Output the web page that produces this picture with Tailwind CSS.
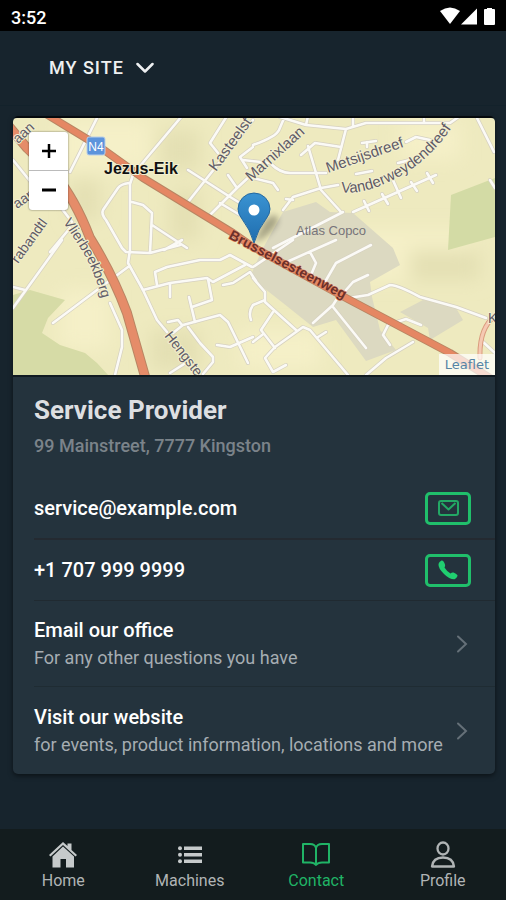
<!DOCTYPE html>
<html lang="en">
<head>
  <meta charset="UTF-8" />
  <meta name="viewport" content="width=device-width, initial-scale=1.0"/>
  <title>Contact</title>
  <script src="https://cdn.jsdelivr.net/npm/@tailwindcss/browser@4"></script>
</head>
<body class="bg-[#17242d] min-h-screen flex flex-col font-['Roboto',sans-serif] text-white">

  <!-- Status bar -->
  <div class="bg-black h-[31px] flex items-center justify-between pl-[11px] pr-2">
    <span class="text-[18px] leading-6 font-medium pt-1">3:52</span>
    <svg class="w-[59px] h-[18px]" viewBox="0 0 59 18" fill="#fff" aria-hidden="true">
      <path d="M1 4Q11-3 21 4L11 17Z"/>
      <path d="M22 17.500 38 1.500V17.500Z"/>
      <path d="M48 2V1h5v1h2q1 0 1 1v14q0 1-1 1h-9q-1 0-1-1V3q0-1 1-1Z"/>
    </svg>
  </div>

  <header class="h-[75px] flex items-center pl-[49px] border-b border-[#13222b]">
    <button type="button" class="flex items-center gap-3 text-[18px] leading-6 font-medium tracking-[1px] text-[#eef0f1]">
      MY SITE
      <svg class="w-[18px] h-3" viewBox="0 0 18 12" fill="none" stroke="currentColor" stroke-width="2.500" stroke-linecap="round" stroke-linejoin="round" aria-hidden="true"><path d="M1.500 2 9 9.500 16.500 2"/></svg>
    </button>
  </header>

  <main class="flex-1 pl-[13px] pr-[11px] pt-[10px] pb-10">
    <section class="bg-[#24333d] rounded-[5px] overflow-hidden shadow-[0_2px_5px_rgba(0,0,0,0.5)]">

      <!-- Map -->
      <div class="relative border-y-2 border-t-[#05090c] border-b-[#101a21]">
        <svg class="block w-full h-[257px] rounded-t-[4px]" viewBox="13 118 482 257" preserveAspectRatio="xMidYMid slice" font-family="Liberation Sans, Arial, sans-serif" role="img" aria-label="Map of Jezus-Eik">
          <defs>
            <filter id="soft" x="-30%" y="-30%" width="160%" height="160%"><feGaussianBlur stdDeviation="9"/></filter>
            <filter id="shade" x="-50%" y="-50%" width="200%" height="200%"><feGaussianBlur stdDeviation="3"/></filter>
            <linearGradient id="pin" x1="0" y1="0" x2="0" y2="1"><stop offset="0" stop-color="#3a93d2"/><stop offset="1" stop-color="#1f6dae"/></linearGradient>
            <g id="streets">
              <path d="M98 116 70 172M62 240 13 308M13 287 25 290M13 160 30 181M53 197 72 222M70 228 50 252"/>
              <path d="M182 116 145 160 133 175 130 184V250L128 263 143 290 157 320 167 332"/>
              <path d="M129 183Q121 184 118 188L103 210Q101 214 106 220L122 248 126 252 150 253 180 245M132 202 143 205 152 213 150 253M152 225 187 248M164 250 182 240"/>
              <path d="M227 116 210 143 218 153M253 120 188 202M188 170 227 195 240 203M228 175 237 188 208 217M220 203 240 215M253 147 240 157 247 168M237 188 250 176"/>
              <path d="M253 145Q276 137 279 130L285 116M280 117 306 125 346 129 366 123 450 123 460 116M308 116 306 125M353 116V127M424 116V121M346 129 338 160"/>
              <path d="M301 155 315 143 341 147M308 146 316 173 321 190 341 212M243 160 270 163Q280 173 290 173H326M253 178 273 183 278 190M283 210 293 197 321 188 338 185M286 199 293 200M273 248 343 212M353 212 436 175"/>
              <path d="M364 201 369 211M382 194 388 204M392 178 401 198M411 182 417 191M427 173 433 183"/>
              <path d="M476 116 494 152M406 142 416 137 430 140M362 143 376 141M367 147V142M356 174 372 171M398 163 410 160M490 180 495 188"/>
              <path d="M53 323 97 290 128 267M110 303 122 330V347L115 375"/>
              <path d="M157 285 155 272 167 267 200 260 220 260 230 255 252 267M143 290 170 283 207 278 213 282 245 265M170 284V297M208 279 212 300 192 307M189 297 195 322M168 322 178 320 182 325"/>
              <path d="M173 333 183 325 220 315 228 322 248 363M188 327 200 343 213 357V362L203 374M170 373 184 364M217 345 230 347 253 337M223 285 233 283 250 272 256 281"/>
              <path d="M253 278 265 292V302L296 330M253 305 265 300M253 305Q248 312 251 320M273 312 261 330 275 348M253 342 262 335M286 365 273 372 265 358 275 347 303 327 310 330 348 375M318 337 326 332"/>
              <path d="M313 323 333 305 340 294M333 307 366 348M342 299 368 295 390 285Q398 285 420 297L456 307 486 318M346 290 353 282 368 275M325 282 336 263 371 245M253 267 293 240M280 265 336 240M310 252 316 263 311 275"/>
              <path d="M366 375 386 358 413 342M390 345 383 335 388 325 406 319 421 325M483 342 495 353"/>
            </g>
          </defs>
          <rect x="13" y="116" width="482" height="260" fill="#eeeabf"/>
          <g filter="url(#soft)">
            <path fill="#f5f0c8" d="M60 120h90v50H60ZM340 230h130v50H340ZM60 290h50v60H60ZM400 120h60v40h-60ZM240 330h80v40h-80Z"/>
            <path fill="#e4e0b4" d="M70 180h30v40H70ZM160 130h40v40h-40ZM410 250h70v30h-70ZM150 330h50v40h-50ZM170 190h30v50h-30Z"/>
          </g>
          <path fill="#d6dba6" d="M13 295 30 290 65 300 48 318 42 333 60 345 85 353 97 363 109 376H13Z"/>
          <path fill="#d3dba5" d="M451 195 495 178V237L448 250Z"/>
          <path fill="#dcd9c1" d="M283 212 316 202 330 212 353 213 393 248 400 265 370 282 372 297 380 330 396 350 366 361 336 320 313 327 283 303 250 277 262 250Z"/>
          <path fill="#dcd9c1" d="M400 312 423 300 456 308 463 320 430 340 428 328Z"/>
          <g fill="none" stroke-linecap="round" stroke-linejoin="round">
            <use href="#streets" stroke="#d6d1c0" stroke-width="4"/>
            <use href="#streets" stroke="#fbfaf6" stroke-width="2.600"/>
            <path d="M495 316Q479 328 480 358" stroke="#d99a7c" stroke-width="5"/>
            <path d="M495 316Q479 328 480 358" stroke="#f5c9b2" stroke-width="3"/>
            <path d="M7 124 27 148 55 175Q75 199 90 238 113 275 127 313L146 380" stroke="#b98563" stroke-width="10"/>
            <path d="M7 124 27 148 55 175Q75 199 90 238 113 275 127 313L146 380" stroke="#e58c69" stroke-width="8"/>
            <path d="M46 114 97 145 143 178 233 233 253 247 346 298 450 353 490 378" stroke="#b98563" stroke-width="8"/>
            <path d="M46 114 97 145 143 178 233 233 253 247 346 298 450 353 490 378" stroke="#e58763" stroke-width="6"/>
          </g>

          <!-- Street names -->
          <g font-size="15" fill="#5f5b66" stroke="#f3efd0" stroke-width="2" stroke-linejoin="round" paint-order="stroke">
            <path id="vanderweyden" d="M341 192Q362 196 397 178 434 158 458 118" fill="none" stroke="none"/>
            <path id="vlier" d="M63 222 77 243Q96 270 105 312" fill="none" stroke="none"/>
            <text font-size="14" transform="translate(18 144) rotate(-43)">aan</text>
            <text font-size="14" transform="translate(17 209) rotate(-35)">aan</text>
            <text font-size="14" transform="translate(18 264) rotate(-54)">rabandtl</text>
            <text transform="translate(216 172) rotate(-54)">Kasteelst</text>
            <text transform="translate(251 182) rotate(-42)">Marnixlaan</text>
            <text transform="translate(328 173) rotate(-19)">Metsijsdreef</text>
            <text><textPath href="#vanderweyden">Vanderweydendreef</textPath></text>
            <text font-size="14"><textPath href="#vlier">Vlierbeekberg</textPath></text>
            <text font-size="14" transform="translate(164 336) rotate(52)">Hengste</text>
            <text font-size="14" x="488" y="323">K</text>
          </g>
          <text font-size="14" fill="#6b302a" stroke="#e58763" stroke-width="1" paint-order="stroke" font-weight="bold" transform="translate(228 238) rotate(28)">Brusselsesteenweg</text>
          <text x="296" y="235" font-size="13" fill="#77747a">Atlas Copco</text>
          <text x="104" y="174" font-size="16" font-weight="bold" fill="#111" stroke="#f3efd0" stroke-width="2" paint-order="stroke">Jezus-Eik</text>
          <rect x="87" y="137" width="18" height="18" rx="2" fill="#5d94dc" stroke="#b9cfe8"/>
          <text x="96" y="151" font-size="12" fill="#fff" text-anchor="middle">N4</text>

          <!-- Marker -->
          <path d="M254 243 264 222Q278 208 278 222 272 235 254 243Z" fill="#000" opacity=".3" filter="url(#shade)"/>
          <path d="M254 243Q250 229 242 219 238 214 238 209A16 16 0 0 1 270 209Q270 214 266 219 258 229 254 243Z" fill="url(#pin)" stroke="#2468a0"/>
          <circle cx="254" cy="210" r="5.500" fill="#fff"/>
        </svg>

        <div class="absolute top-[14px] left-4 w-[39px] rounded-[3px] overflow-hidden bg-white shadow-[0_0_2px_rgba(0,0,0,0.6)]">
          <button type="button" aria-label="Zoom in" class="flex w-full h-[39px] items-center justify-center border-b border-[#bbb]">
            <svg class="w-[14px] h-[14px]" viewBox="0 0 14 14" stroke="#000" stroke-width="2.500" aria-hidden="true"><path d="M7 0v14M0 7h14"/></svg>
          </button>
          <button type="button" aria-label="Zoom out" class="flex w-full h-[39px] items-center justify-center">
            <svg class="w-[14px] h-[14px]" viewBox="0 0 14 14" stroke="#000" stroke-width="3" aria-hidden="true"><path d="M0 6h14"/></svg>
          </button>
        </div>
        <a href="#" class="absolute right-0 bottom-0 h-[21px] px-[6px] bg-white/70 font-['DejaVu_Sans',sans-serif] text-[13px] leading-[21px] text-[#5584a5]">Leaflet</a>
      </div>

      <div class="pl-[21px] pr-6 pt-[17px] pb-5">
        <h1 class="text-[26px] leading-8 font-bold text-[#dddfe1]">Service Provider</h1>
        <p class="text-[18px] leading-6 pt-2 font-medium text-[#7b838a]">99 Mainstreet, 7777 Kingston</p>
      </div>

      <ul class="pl-[21px]">
        <li class="h-[62px] pr-6 flex items-center justify-between border-b-2 border-[#242a31]">
          <span class="text-[20px] leading-6 font-medium">service@example.com</span>
          <button type="button" aria-label="Send email" class="w-[46px] h-[33px] rounded-[5px] border-[3px] border-[#20bf6b] flex items-center justify-center text-[#23a865]">
            <svg class="w-[21px] h-4" viewBox="0 0 21 16" fill="none" stroke="currentColor" stroke-width="2" stroke-linejoin="round" aria-hidden="true"><rect x="1" y="1" width="19" height="14" rx="2"/><path d="M3.500 3 10.500 9.500 17.500 3"/></svg>
          </button>
        </li>
        <li class="h-[61px] pr-6 flex items-center justify-between border-b border-[#202a31]">
          <span class="text-[20px] leading-6 font-medium">+1 707 999 9999</span>
          <button type="button" aria-label="Call" class="w-[46px] h-[33px] rounded-[5px] border-[3px] border-[#20bf6b] flex items-center justify-center text-[#20cf70]">
            <svg class="w-5 h-5" viewBox="0 0 20 20" fill="currentColor" aria-hidden="true"><path d="M.500 4Q1 1.500 3.500 .500 5.500 0 7 4.500 7.500 6 6.500 7.500 8.500 11 12.500 13.500 14 12 15.500 12.500 20 14.500 19.500 16 18.500 18.500 16.500 19.300 11.500 19.500 6 14 0 8 .500 4Z"/></svg>
          </button>
        </li>
        <li class="border-b border-[#1f2c33]">
          <a href="#" class="h-[85px] pr-[27px] flex items-center justify-between">
            <span>
              <span class="block text-[20px] leading-7 font-medium">Email our office</span>
              <span class="block text-[18px] leading-7 text-[#a6adb2]">For any other questions you have</span>
            </span>
            <svg class="shrink-0 w-3 h-[18px]" viewBox="0 0 12 18" fill="none" stroke="#657078" stroke-width="2" stroke-linecap="round" aria-hidden="true"><path d="M2 1.500 10 9 2 16.500"/></svg>
          </a>
        </li>
        <li>
          <a href="#" class="h-[87px] pr-[27px] flex items-center justify-between">
            <span>
              <span class="block text-[20px] leading-7 font-medium">Visit our website</span>
              <span class="block text-[18px] leading-7 text-[#a6adb2]">for events, product information, locations and more</span>
            </span>
            <svg class="shrink-0 w-3 h-[18px]" viewBox="0 0 12 18" fill="none" stroke="#657078" stroke-width="2" stroke-linecap="round" aria-hidden="true"><path d="M2 1.500 10 9 2 16.500"/></svg>
          </a>
        </li>
      </ul>
    </section>
  </main>

  <!-- Tab bar -->
  <nav class="h-[71px] bg-[#131c1e] grid grid-cols-4 text-[16px] leading-6 text-[#b0b4b5]">
    <a href="#" class="flex flex-col items-center pt-3">
      <svg class="w-7 h-7" viewBox="0 0 28 28" fill="#c6cacb" aria-hidden="true"><path d="M14 1 18.500 5V2.500H22.500V9L28 14 26.500 15.500 14 4 1.500 15.500 0 14Z"/><path d="M14 5.500 25 15.500V26.500H17V18H11.500V26.500H3.500V15.500Z"/></svg>
      Home
    </a>
    <a href="#" class="flex flex-col items-center pt-3">
      <svg class="w-7 h-7" viewBox="0 0 28 28" fill="#c6cacb" aria-hidden="true"><path d="M8 5.500H26V9H8ZM8 12H26V15.500H8ZM8 18.500H26V22H8Z"/><circle cx="4" cy="7.250" r="2"/><circle cx="4" cy="13.750" r="2"/><circle cx="4" cy="20.250" r="2"/></svg>
      Machines
    </a>
    <a href="#" class="flex flex-col items-center pt-3 text-[#20b466]" aria-current="page">
      <svg class="w-7 h-7" viewBox="0 0 28 28" fill="none" stroke="currentColor" stroke-width="2" stroke-linejoin="round" aria-hidden="true"><path d="M14 24Q12 21.500 8 21.500H1V3H8Q13 3 14 7 15 3 20 3H27V21.500H20Q16 21.500 14 24ZM14 7V24"/></svg>
      Contact
    </a>
    <a href="#" class="flex flex-col items-center pt-3">
      <svg class="w-7 h-7" viewBox="0 0 28 28" fill="none" stroke="currentColor" stroke-width="2.300" stroke-linejoin="round" aria-hidden="true"><ellipse cx="14" cy="7.500" rx="5.500" ry="6"/><path d="M3 25.500Q4 16.500 14 16.500T25 25.500Z"/></svg>
      Profile
    </a>
  </nav>
</body>
</html>
